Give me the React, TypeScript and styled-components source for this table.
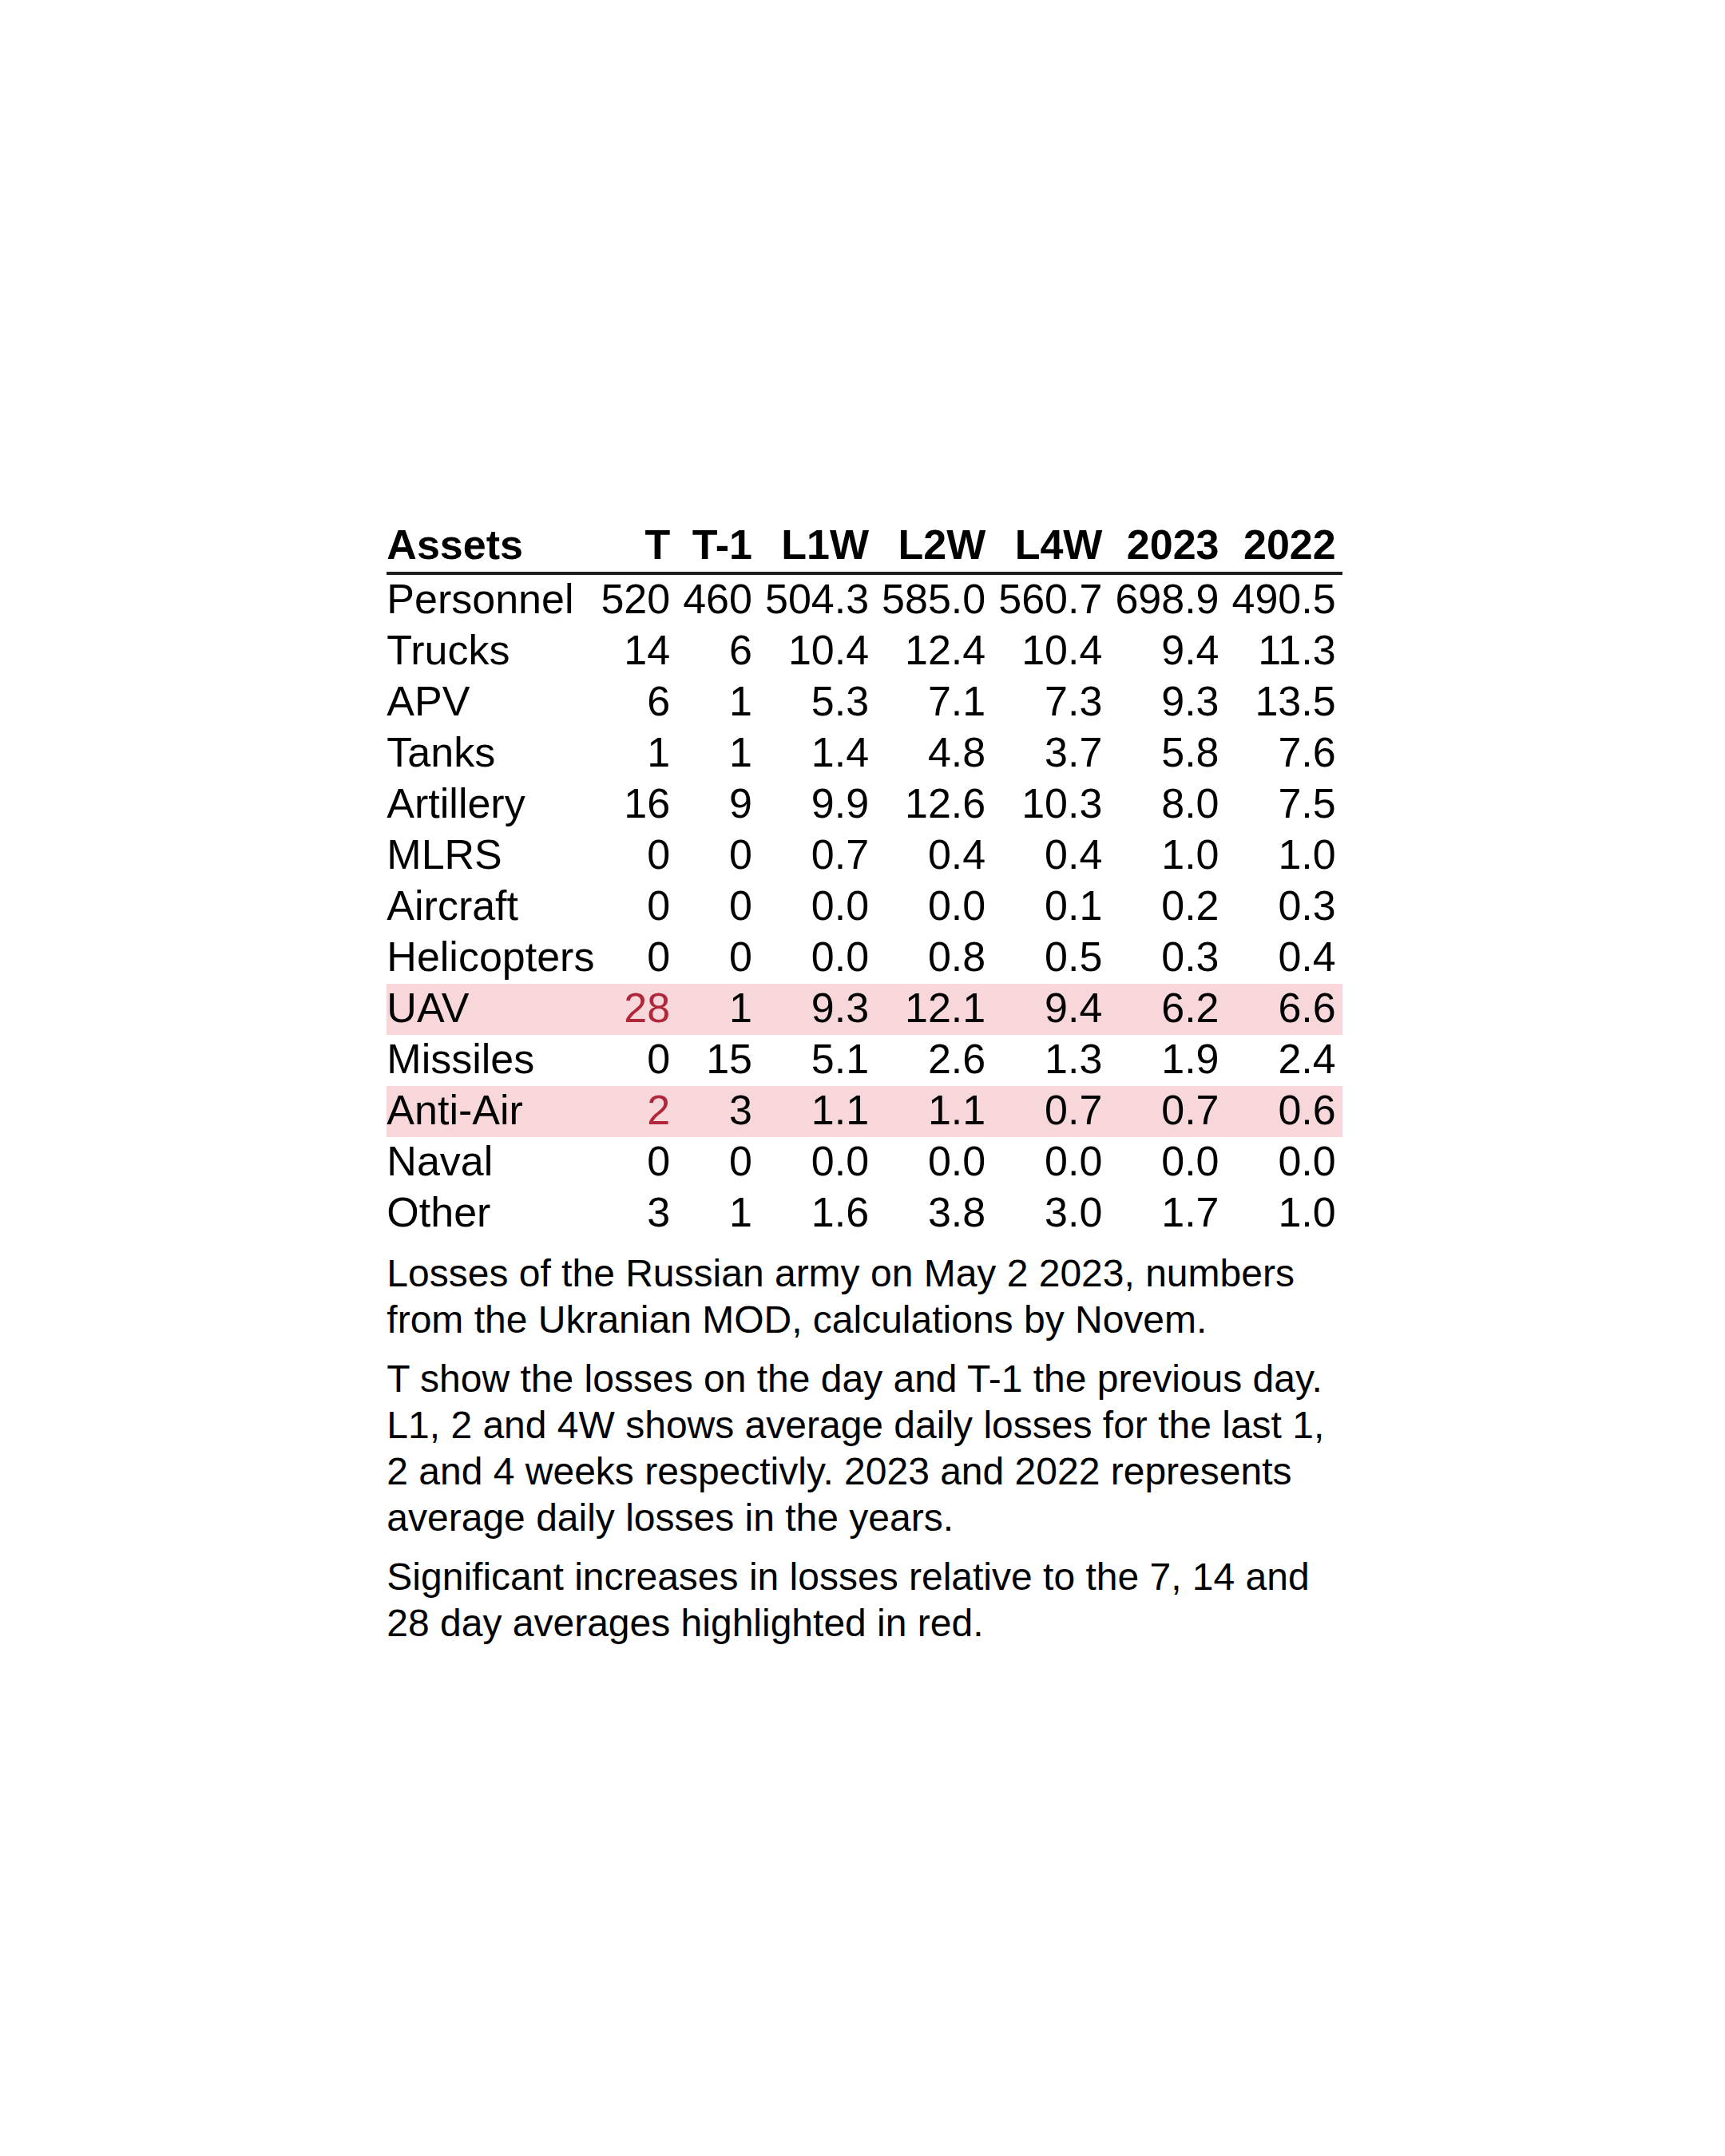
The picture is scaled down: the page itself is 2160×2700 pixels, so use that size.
import React from "react";
import styled, { createGlobalStyle } from "styled-components";

const GlobalStyle = createGlobalStyle`
  html, body {
    margin: 0;
    padding: 0;
    background: #ffffff;
  }
  body {
    font-family: "Liberation Sans", Arial, sans-serif;
    color: #000000;
  }
`;

const Page = styled.div`
  display: flex;
  justify-content: center;
  align-items: flex-start;
  padding: 652px 0 0 5px;
  min-height: 2700px;
  box-sizing: border-box;
`;

const Table = styled.table`
  border-collapse: collapse;
  border-spacing: 0;
  font-family: "Liberation Sans", Arial, sans-serif;
  font-size: 52px;
  line-height: 60px;
`;

const HeadCell = styled.th<{ $left?: boolean }>`
  font-weight: 700;
  text-align: ${(p) => (p.$left ? "left" : "right")};
  padding: ${(p) => (p.$left ? "0 0 4px 0" : "0 8px 4px 8px")};
  border-bottom: 4px solid #1e1e1e;
  white-space: nowrap;
`;

const Row = styled.tr<{ $hl?: boolean }>`
  background: ${(p) => (p.$hl ? "#f8d7da" : "transparent")};
`;

const LabelCell = styled.td`
  text-align: left;
  padding: 0 0 4px 0;
  white-space: nowrap;
`;

const NumCell = styled.td<{ $red?: boolean }>`
  text-align: right;
  padding: 0 8px 4px 8px;
  white-space: nowrap;
  color: ${(p) => (p.$red ? "#b0273a" : "#000000")};
`;

const Notes = styled.caption`
  caption-side: bottom;
  text-align: left;
  padding: 14px 8px 0 0;
  font-size: 48px;
  line-height: 58px;
`;

const Note = styled.p`
  margin: 0 0 16px 0;
`;

type Asset = {
  name: string;
  values: string[];
  hl?: boolean;
};

const cols = ["T", "T-1", "L1W", "L2W", "L4W", "2023", "2022"];

const rows: Asset[] = [
  { name: "Personnel", values: ["520", "460", "504.3", "585.0", "560.7", "698.9", "490.5"] },
  { name: "Trucks", values: ["14", "6", "10.4", "12.4", "10.4", "9.4", "11.3"] },
  { name: "APV", values: ["6", "1", "5.3", "7.1", "7.3", "9.3", "13.5"] },
  { name: "Tanks", values: ["1", "1", "1.4", "4.8", "3.7", "5.8", "7.6"] },
  { name: "Artillery", values: ["16", "9", "9.9", "12.6", "10.3", "8.0", "7.5"] },
  { name: "MLRS", values: ["0", "0", "0.7", "0.4", "0.4", "1.0", "1.0"] },
  { name: "Aircraft", values: ["0", "0", "0.0", "0.0", "0.1", "0.2", "0.3"] },
  { name: "Helicopters", values: ["0", "0", "0.0", "0.8", "0.5", "0.3", "0.4"] },
  { name: "UAV", values: ["28", "1", "9.3", "12.1", "9.4", "6.2", "6.6"], hl: true },
  { name: "Missiles", values: ["0", "15", "5.1", "2.6", "1.3", "1.9", "2.4"] },
  { name: "Anti-Air", values: ["2", "3", "1.1", "1.1", "0.7", "0.7", "0.6"], hl: true },
  { name: "Naval", values: ["0", "0", "0.0", "0.0", "0.0", "0.0", "0.0"] },
  { name: "Other", values: ["3", "1", "1.6", "3.8", "3.0", "1.7", "1.0"] },
];

export default function App() {
  return (
    <>
      <GlobalStyle />
      <Page>
        <Table>
          <Notes>
            <Note>
              Losses of the Russian army on May 2 2023, numbers from the Ukranian MOD, calculations by Novem.
            </Note>
            <Note>
              T show the losses on the day and T-1 the previous day. L1, 2 and 4W shows average daily losses for the last 1, 2 and 4 weeks respectivly. 2023 and 2022 represents average daily losses in the years.
            </Note>
            <Note>
              Significant increases in losses relative to the 7, 14 and 28 day averages highlighted in red.
            </Note>
          </Notes>
          <thead>
            <tr>
              <HeadCell $left>Assets</HeadCell>
              {cols.map((c) => (
                <HeadCell key={c}>{c}</HeadCell>
              ))}
            </tr>
          </thead>
          <tbody>
            {rows.map((r) => (
              <Row key={r.name} $hl={r.hl}>
                <LabelCell>{r.name}</LabelCell>
                {r.values.map((v, i) => (
                  <NumCell key={i} $red={r.hl && i === 0}>
                    {v}
                  </NumCell>
                ))}
              </Row>
            ))}
          </tbody>
        </Table>
      </Page>
    </>
  );
}
